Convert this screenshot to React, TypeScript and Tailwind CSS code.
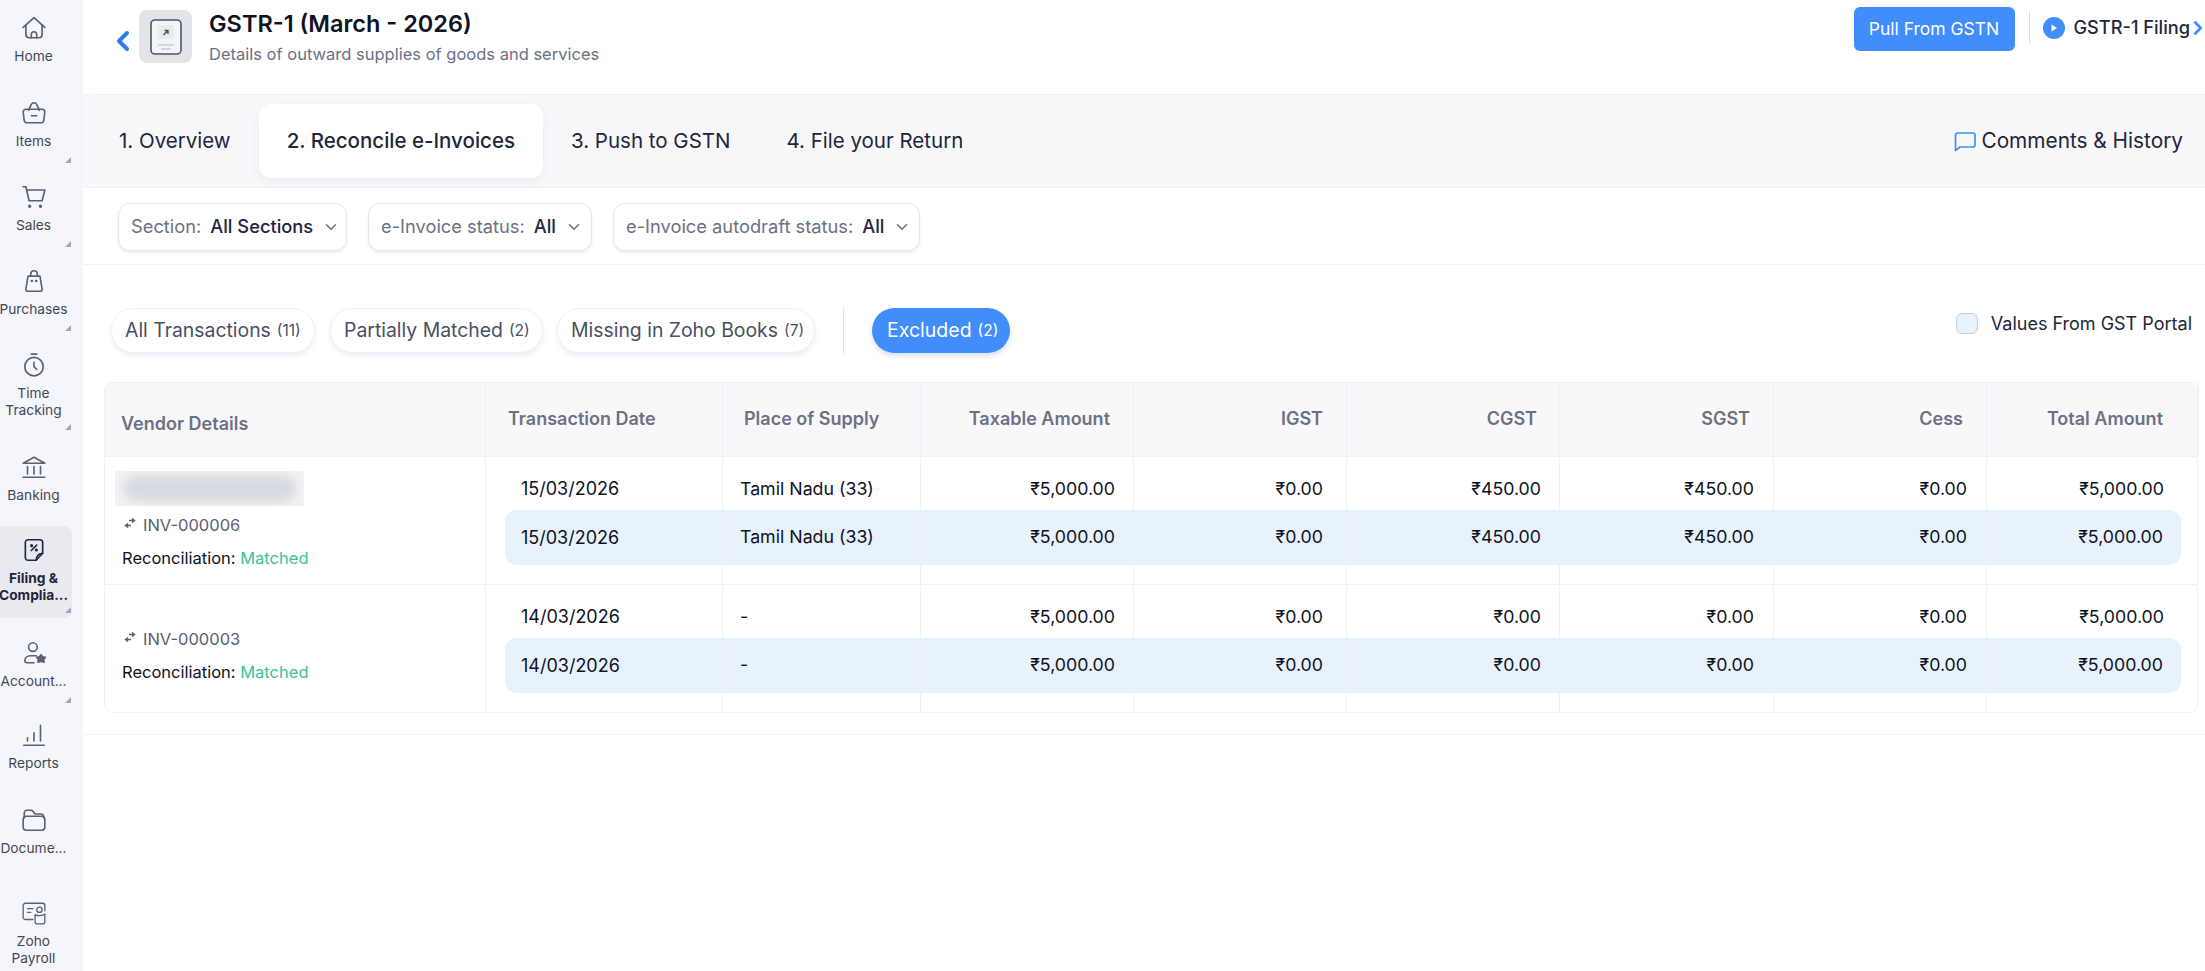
import { ChevronDown, ChevronLeft, ChevronRight } from "lucide-react";
import type { ReactNode } from "react";

const iconProps = {
  fill: "none",
  stroke: "#5b6072",
  strokeWidth: 1.5,
  strokeLinecap: "round" as const,
  strokeLinejoin: "round" as const,
  viewBox: "0 0 24 24",
  className: "w-[26px] h-[26px]",
};

const HomeIcon = () => (
  <svg {...iconProps}>
    <path d="M2 11.5 12 2.500l10 9" />
    <path d="M4.500 9.500V18a3 3 0 0 0 3 3h9a3 3 0 0 0 3-3V9.500" />
    <path d="M9.500 21v-3a2.500 2.500 0 0 1 5 0v3" />
  </svg>
);
const ItemsIcon = () => (
  <svg {...iconProps}>
    <path d="M7 9.5 9.5 4a3 3 0 0 1 2.5-1.5A3 3 0 0 1 14.500 4L17 9.500" />
    <path d="M4.500 8.500h15A2.500 2.500 0 0 1 22 11l-1 8a2.500 2.500 0 0 1-2.500 2h-13A2.500 2.500 0 0 1 3 19l-1-8a2.500 2.500 0 0 1 2.500-2.500Z" />
    <path d="M9.500 14.500h5" />
  </svg>
);
const SalesIcon = () => (
  <svg {...iconProps}>
    <path d="M2 2.500h2.500L7.500 15.500h12l2.500-10H5.500" />
    <circle cx="8" cy="20.500" r="0.8" fill="#5b6072" />
    <circle cx="18" cy="20.500" r="0.8" fill="#5b6072" />
  </svg>
);
const PurchasesIcon = () => (
  <svg {...iconProps}>
    <path d="M6.500 7.500h11l2 12a2 2 0 0 1-2 2h-11a2 2 0 0 1-2-2Z" />
    <path d="M9 7.500V5.500a3 3 0 0 1 6 0v2" />
    <circle cx="10" cy="12" r="0.5" fill="#5b6072" />
    <circle cx="14" cy="12" r="0.5" fill="#5b6072" />
  </svg>
);
const TimeIcon = () => (
  <svg {...iconProps}>
    <circle cx="12" cy="13.500" r="8.500" />
    <path d="M9.500 2h5" />
    <path d="M12 9.500v4l2.500 2.500" />
  </svg>
);
const BankIcon = () => (
  <svg {...iconProps}>
    <path d="M2 8.500 12 3l10 5.500Z" />
    <path d="M6 11.500v7M12 11.500v7M18 11.500v7" />
    <path d="M2 21.500h20" />
  </svg>
);
const FilingIcon = () => (
  <svg {...iconProps} stroke="#21263c">
    <path d="M20 15V5a2.500 2.500 0 0 0-2.500-2.500h-11A2.500 2.500 0 0 0 4 5v14a2.500 2.500 0 0 0 2.500 2.500H14Z" />
    <path d="M14 21.500c0-3.500 2-6 6-6.500" />
    <path d="M14.500 7.500 9.500 12.500" />
    <circle cx="9.800" cy="8" r="0.7" fill="#21263c" />
    <circle cx="14.200" cy="12" r="0.7" fill="#21263c" />
  </svg>
);
const AccountantIcon = () => (
  <svg {...iconProps}>
    <circle cx="11" cy="6.500" r="4" />
    <path d="M14 14.500H8.500a5 5 0 0 0-5 4.500v0a2 2 0 0 0 2 2H12" />
    <path d="m18.500 13.500 1.500 2 2.500.5-1.500 2 .3 2.500-2.800-1-2.800 1 .3-2.500-1.500-2 2.500-.5Z" fill="#5b6072" />
  </svg>
);
const ReportsIcon = () => (
  <svg {...iconProps}>
    <path d="M2.500 21.500h19" />
    <path d="M6 17.500v-3M12 17.500V10M18 17.500V3" />
  </svg>
);
const DocumentsIcon = () => (
  <svg {...iconProps}>
    <path d="M3 10V5.500A2.500 2.500 0 0 1 5.500 3h3.800a2 2 0 0 1 1.500.700L13 6.500h5.500A2.500 2.500 0 0 1 21 9v1" />
    <rect x="2" y="8.500" width="20" height="13" rx="3" />
  </svg>
);
const PayrollIcon = () => (
  <svg {...iconProps} strokeWidth={1.2}>
    <path d="M11 18H4a2 2 0 0 1-2-2V5a2 2 0 0 1 2-2h16a2 2 0 0 1 2 2v5" />
    <path d="M6 8h5M6 11.500h3" />
    <circle cx="17" cy="9" r="2.500" />
    <path d="M13 13.500c0 0 1.500 1 4 1s5-1.500 5-1.500v7a2 2 0 0 1-2 2h-5a2 2 0 0 1-2-2Z" />
  </svg>
);

const navItems: { label: string[]; icon: ReactNode; h: string; caret?: boolean; active?: boolean }[] = [
  { label: ["Home"], icon: <HomeIcon />, h: "h-[85px]" },
  { label: ["Items"], icon: <ItemsIcon />, h: "h-[84px]", caret: true },
  { label: ["Sales"], icon: <SalesIcon />, h: "h-[84px]", caret: true },
  { label: ["Purchases"], icon: <PurchasesIcon />, h: "h-[84px]", caret: true },
  { label: ["Time", "Tracking"], icon: <TimeIcon />, h: "h-[102px]", caret: true },
  { label: ["Banking"], icon: <BankIcon />, h: "h-[87px]" },
  { label: ["Filing &", "Complia..."], icon: <FilingIcon />, h: "h-[99px]", caret: true, active: true },
  { label: ["Account..."], icon: <AccountantIcon />, h: "h-[82px]", caret: true },
  { label: ["Reports"], icon: <ReportsIcon />, h: "h-[85px]" },
  { label: ["Docume..."], icon: <DocumentsIcon />, h: "h-[93px]" },
  { label: ["Zoho", "Payroll"], icon: <PayrollIcon />, h: "h-[86px]" },
];

function Sidebar() {
  return (
    <aside className="w-[83px] h-[971px] shrink-0 bg-[#f5f6fb] overflow-hidden">
      {navItems.map((item) => (
        <div key={item.label[0]} className={`${item.h} relative`}>
          {item.active ? (
            <div className="absolute left-0 top-0 w-[72px] h-[92px] rounded-r-lg bg-[#e9eaf0]" />
          ) : null}
          <div className={`relative w-[67px] flex flex-col items-center ${item.active ? "pt-[11px]" : "pt-[15px]"}`}>
            {item.icon}
            <div
              className={`mt-[7px] text-center text-[13.750px] leading-[17px] whitespace-nowrap ${
                item.active ? "font-bold text-[#21263c]" : "text-[#434859]"
              }`}
            >
              {item.label.map((l) => (
                <div key={l}>{l}</div>
              ))}
            </div>
          </div>
          {item.caret ? (
            <div
              className={`absolute left-[65px] w-0 h-0 border-l-[6px] border-l-transparent border-b-[6px] border-b-[#a4a7b2] ${
                item.active ? "top-[81px]" : item.label.length > 1 ? "top-[87px]" : "top-[72px]"
              }`}
            />
          ) : null}
        </div>
      ))}
    </aside>
  );
}

function Header() {
  return (
    <header className="h-[94px] flex justify-between pl-[24px] pr-[3px]">
      <div className="flex items-start">
        <ChevronLeft className="w-[32px] h-[32px] mt-[25px] text-[#2f7bf0]" strokeWidth={3} />
        <div className="mt-[10px] w-[53px] h-[53px] rounded-lg bg-[#e3e4e9] flex items-center justify-center">
          <svg viewBox="0 0 32 36" className="w-[32px] h-[36px]" fill="none">
            <rect x="1" y="1" width="30" height="34" rx="4" stroke="#505465" strokeWidth="1.600" fill="#f3f4f7" />
            <rect x="8" y="6" width="16" height="14" rx="2" fill="#e9eaef" />
            <path d="M13.500 16 18 11.500M14.500 11.500H18V15" stroke="#474b5c" strokeWidth="1.400" />
            <path d="M8 26h16M11 30h10" stroke="#b6b9c4" strokeWidth="1.200" />
          </svg>
        </div>
        <div className="ml-[17px] mt-[9px]">
          <div className="text-[23.500px] leading-[30px] font-semibold text-[#0f1222] whitespace-nowrap">GSTR-1 (March - 2026)</div>
          <div className="mt-[4px] text-[16.500px] leading-[22px] text-[#6c7184] whitespace-nowrap">
            Details of outward supplies of goods and services
          </div>
        </div>
      </div>
      <div className="flex items-start pt-[7px]">
        <button className="w-[161px] h-[44px] rounded-md bg-[#408dfb] text-white text-[17.500px] font-normal">
          Pull From GSTN
        </button>
        <div className="ml-[14px] mt-[4px] w-px h-[33px] bg-[#dcdde3]" />
        <div className="ml-[13px] flex items-center h-[42px]">
          <svg viewBox="0 0 22 22" className="w-[22px] h-[22px]">
            <circle cx="11" cy="11" r="11" fill="#408dfb" />
            <path d="M8.500 7.500v7l5.500-3.500Z" fill="#fff" />
          </svg>
          <span className="ml-[9px] text-[18.200px] font-medium text-[#21263c] whitespace-nowrap">GSTR-1 Filing</span>
          <ChevronRight className="w-[22px] h-[22px] -ml-[3px] -mr-[7px] shrink-0 text-[#408dfb]" strokeWidth={3} />
        </div>
      </div>
    </header>
  );
}

const tabs = ["1. Overview", "2. Reconcile e-Invoices", "3. Push to GSTN", "4. File your Return"];

function Tabs() {
  return (
    <nav className="h-[94px] bg-[#f8f8fb] border-y border-[#f0f1f6] flex items-center justify-between pl-[8px] pr-[22px]">
      <div className="flex items-center">
        {tabs.map((t) => (
          <div
            key={t}
            className={`h-[74px] px-[28px] flex items-center text-[20.500px] whitespace-nowrap text-[#21263c] ${
              t.startsWith("2") ? "bg-white rounded-xl font-medium shadow-[0_4px_10px_rgba(220,222,235,0.45)]" : ""
            }`}
          >
            {t}
          </div>
        ))}
      </div>
      <div className="flex items-center gap-[4px]">
        <svg viewBox="0 0 24 24" className="w-[24px] h-[24px]" fill="none" stroke="#408dfb" strokeWidth="1.700" strokeLinejoin="round">
          <path d="M5 4h15a2 2 0 0 1 2 2v10a2 2 0 0 1-2 2H7l-4.500 3.500V6.500A2.500 2.500 0 0 1 5 4Z" />
        </svg>
        <span className="text-[20.800px] text-[#21263c] whitespace-nowrap">Comments &amp; History</span>
      </div>
    </nav>
  );
}

function FilterChip({ label, value, className }: { label: string; value: string; className: string }) {
  return (
    <div className={`h-[48px] rounded-xl bg-white border border-[#e6e7ef] shadow-[0_2px_3px_rgba(225,227,238,0.6)] flex items-center pl-[12px] ${className}`}>
      <span className="text-[18.300px] text-[#6c7184] whitespace-nowrap">{label}</span>
      <span className="ml-[9px] text-[18.300px] font-medium text-[#21263c] whitespace-nowrap">{value}</span>
      <ChevronDown className="ml-[9px] w-[18px] h-[18px] text-[#6c7184]" />
    </div>
  );
}

function Filters() {
  return (
    <div className="h-[77px] border-b border-[#f0f1f6] flex items-start gap-[21px] pt-[15px] pl-[35px]">
      <FilterChip label="Section:" value="All Sections" className="w-[229px]" />
      <FilterChip label="e-Invoice status:" value="All" className="w-[224px]" />
      <FilterChip label="e-Invoice autodraft status:" value="All" className="w-[307px]" />
    </div>
  );
}

function Pill({ label, count, className }: { label: string; count: string; className: string }) {
  return (
    <div className={`h-[45px] rounded-full bg-white border border-[#f0f1f6] shadow-[0_3px_5px_rgba(225,227,238,0.6)] flex items-center pl-[13px] whitespace-nowrap text-[#4a4f63] ${className}`}>
      <span className="text-[19.400px]">{label}</span>
      <span className="ml-[6px] text-[15.500px]">{count}</span>
    </div>
  );
}

function PillRow() {
  return (
    <div className="h-[117px] flex items-start justify-between pt-[43px] pl-[28px] pr-[13px]">
      <div className="flex items-start">
        <Pill label="All Transactions" count="(11)" className="w-[204px]" />
        <Pill label="Partially Matched" count="(2)" className="ml-[15px] w-[213px]" />
        <Pill label="Missing in Zoho Books" count="(7)" className="ml-[14px] w-[258px]" />
        <div className="ml-[28px] w-px h-[47px] bg-[#e3e4ea]" />
        <div className="ml-[28px] w-[138px] h-[45px] rounded-full bg-[#408dfb] shadow-[0_3px_5px_rgba(200,210,235,0.7)] flex items-center pl-[15px] whitespace-nowrap text-white">
          <span className="text-[19.500px]">Excluded</span>
          <span className="ml-[6px] text-[15.500px]">(2)</span>
        </div>
      </div>
      <div className="flex items-center mt-[2px]">
        <div className="w-[22px] h-[21px] rounded-[6px] bg-[#e8f2fd] border border-[#c5cbdc]" />
        <span className="ml-[13px] text-[18px] text-[#21263c] whitespace-nowrap">Values From GST Portal</span>
      </div>
    </div>
  );
}

const gridCols = "grid-cols-[237px_198px_213px_213px_213px_214px_213px_212px]";
const divider = "border-r border-[#f0f1f6]";

const headers = [
  { t: "Transaction Date", c: "pl-[22px] text-left" },
  { t: "Place of Supply", c: "pl-[21px] text-left" },
  { t: "Taxable Amount", c: "pr-[23px] text-right" },
  { t: "IGST", c: "pr-[23px] text-right" },
  { t: "CGST", c: "pr-[22px] text-right" },
  { t: "SGST", c: "pr-[23px] text-right" },
  { t: "Cess", c: "pr-[23px] text-right" },
  { t: "Total Amount", c: "pr-[35px] text-right" },
];

function TableHead() {
  return (
    <div className="flex h-[74px] bg-[#f8f8fb] border-b border-[#f0f1f6] rounded-t-lg">
      <div className="w-[381px] shrink-0 border-r border-[#f0f1f6] pl-[16px] pt-[29px] text-[18px] leading-[24px] font-semibold text-[#6c7184]">
        Vendor Details
      </div>
      <div className={`grid ${gridCols}`}>
        {headers.map((h) => (
          <div key={h.t} className={`${divider} ${h.c} pt-[24px] text-[18px] leading-[24px] font-semibold text-[#6c7184] whitespace-nowrap`}>
            {h.t}
          </div>
        ))}
      </div>
    </div>
  );
}

const SyncIcon = () => (
  <svg viewBox="0 0 12 12" className="w-[12px] h-[12px] mt-[-5px] shrink-0" fill="none" stroke="#5b6072" strokeWidth="1.500">
    <path d="M5 3.500h5M8 1.500l2.500 2-2.500 2" />
    <path d="M7 8.500H2M4 6.500l-2.500 2 2.500 2" />
  </svg>
);

function ValueColumn({ top, bottom, cls, topCls = "", bottomCls = "", last, textSize = "text-[17.750px]" }: {
  top: string; bottom: string; cls: string; topCls?: string; bottomCls?: string; last?: boolean; textSize?: string;
}) {
  return (
    <div className={`h-[127px] ${last ? "" : divider} ${textSize} text-[#0f1222] whitespace-nowrap`}>
      <div className={`h-[53px] pt-[20px] leading-[24px] ${cls} ${topCls}`}>{top}</div>
      <div className={`h-[55px] bg-[#e8f2fd] flex items-center pb-[1px] ${cls} ${bottomCls}`}>{bottom}</div>
    </div>
  );
}

function DataRow({ date, place, cgst, invoice, blurred }: {
  date: string; place: string; cgst: string; invoice: string; blurred?: boolean;
}) {
  const money = ["₹5,000.00", "₹0.00", cgst, cgst, "₹0.00"];
  const pads = [
    "justify-end text-right pr-[18px]",
    "justify-end text-right pr-[23px]",
    "justify-end text-right pr-[18px]",
    "justify-end text-right pr-[19px]",
    "justify-end text-right pr-[19px]",
  ];
  return (
    <div className="flex h-[127px]">
      <div className="w-[381px] shrink-0 border-r border-[#f0f1f6] pl-[10px]">
        {blurred ? (
          <div className="mt-[14px] w-[189px] h-[35px] overflow-hidden bg-[#f1f2f5] flex items-center justify-center">
            <div className="w-[172px] h-[27px] rounded-full bg-[#d8dae1] blur-[5px]" />
          </div>
        ) : (
          <div className="h-[35px]" />
        )}
        <div className="pl-[9px] mt-[8px] flex items-center text-[16.500px] leading-[22px] text-[#5b6072]">
          <SyncIcon />
          <span className="ml-[7px]">{invoice}</span>
        </div>
        <div className="pl-[7px] mt-[11px] text-[16.500px] leading-[22px] text-[#0f1222] whitespace-nowrap">
          Reconciliation: <span className="text-[#3cc394]">Matched</span>
        </div>
      </div>
      <div className={`grid ${gridCols}`}>
        <ValueColumn textSize="text-[18px]" top={date} bottom={date} cls="" topCls="pl-[35px]" bottomCls="ml-[19px] rounded-l-xl pl-[16px]" />
        <ValueColumn top={place} bottom={place} cls="pl-[17px]" />
        {money.map((m, i) => (
          <ValueColumn key={i} top={m} bottom={m} cls={pads[i]} />
        ))}
        <ValueColumn last top="₹5,000.00" bottom="₹5,000.00" cls="" topCls="text-right pr-[35px]" bottomCls="mr-[18px] rounded-r-xl justify-end pr-[18px]" />
      </div>
    </div>
  );
}

function Table() {
  return (
    <div className="ml-[21px] w-[2094px] border border-[#f0f1f6] rounded-lg">
      <TableHead />
      <DataRow blurred date="15/03/2026" place="Tamil Nadu (33)" cgst="₹450.00" invoice="INV-000006" />
      <div className="border-t border-[#f0f1f6]">
        <DataRow date="14/03/2026" place="-" cgst="₹0.00" invoice="INV-000003" />
      </div>
    </div>
  );
}

export default function App() {
  return (
    <div className="flex h-[971px] overflow-hidden bg-white font-['Inter',sans-serif]">
      <Sidebar />
      <main className="flex-1 min-w-0">
        <Header />
        <Tabs />
        <Filters />
        <PillRow />
        <Table />
        <div className="mt-[21px] border-t border-[#f0f1f6]" />
      </main>
    </div>
  );
}
